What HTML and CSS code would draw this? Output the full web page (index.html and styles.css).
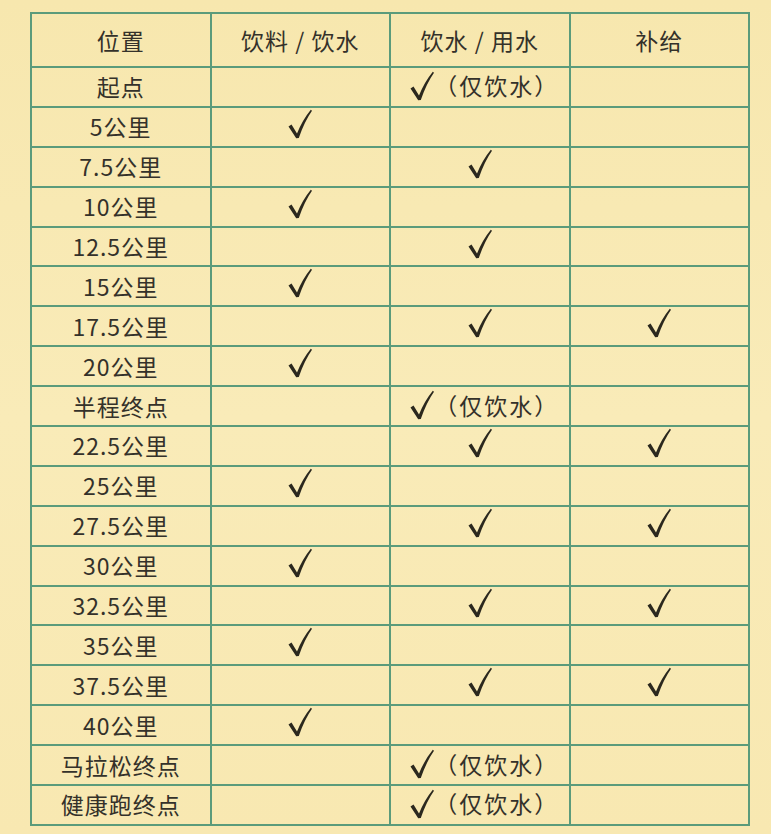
FILE: index.html
```html
<!DOCTYPE html>
<html lang="zh">
<head>
<meta charset="utf-8">
<link rel="stylesheet" href="styles.css">
</head>
<body>
<svg width="0" height="0" class="defs">
  <defs>
    <symbol id="chk" viewBox="0 0 24 30">
      <path d="M0.5 17.5 L3.5 15.5 L9 24.5 Q14.5 11 22.8 0.8 L24 1.8 Q16.5 12.5 10.8 29 L8.2 29.2 Z"/>
    </symbol>
  </defs>
</svg>
<div class="page">
<table class="grid">
  <colgroup><col class="c1"><col class="c2"><col class="c3"><col class="c4"></colgroup>
  <thead>
    <tr class="head"><th>位置</th><th>饮料 / 饮水</th><th>饮水 / 用水</th><th>补给</th></tr>
  </thead>
  <tbody>
    <tr><td>起点</td><td></td><td><span class="only"><svg class="ck"><use href="#chk"/></svg><span>（仅饮水）</span></span></td><td></td></tr>
    <tr><td>5公里</td><td><svg class="ck"><use href="#chk"/></svg></td><td></td><td></td></tr>
    <tr><td>7.5公里</td><td></td><td><svg class="ck"><use href="#chk"/></svg></td><td></td></tr>
    <tr><td>10公里</td><td><svg class="ck"><use href="#chk"/></svg></td><td></td><td></td></tr>
    <tr><td>12.5公里</td><td></td><td><svg class="ck"><use href="#chk"/></svg></td><td></td></tr>
    <tr><td>15公里</td><td><svg class="ck"><use href="#chk"/></svg></td><td></td><td></td></tr>
    <tr><td>17.5公里</td><td></td><td><svg class="ck"><use href="#chk"/></svg></td><td><svg class="ck"><use href="#chk"/></svg></td></tr>
    <tr><td>20公里</td><td><svg class="ck"><use href="#chk"/></svg></td><td></td><td></td></tr>
    <tr><td>半程终点</td><td></td><td><span class="only"><svg class="ck"><use href="#chk"/></svg><span>（仅饮水）</span></span></td><td></td></tr>
    <tr><td>22.5公里</td><td></td><td><svg class="ck"><use href="#chk"/></svg></td><td><svg class="ck"><use href="#chk"/></svg></td></tr>
    <tr><td>25公里</td><td><svg class="ck"><use href="#chk"/></svg></td><td></td><td></td></tr>
    <tr><td>27.5公里</td><td></td><td><svg class="ck"><use href="#chk"/></svg></td><td><svg class="ck"><use href="#chk"/></svg></td></tr>
    <tr><td>30公里</td><td><svg class="ck"><use href="#chk"/></svg></td><td></td><td></td></tr>
    <tr><td>32.5公里</td><td></td><td><svg class="ck"><use href="#chk"/></svg></td><td><svg class="ck"><use href="#chk"/></svg></td></tr>
    <tr><td>35公里</td><td><svg class="ck"><use href="#chk"/></svg></td><td></td><td></td></tr>
    <tr><td>37.5公里</td><td></td><td><svg class="ck"><use href="#chk"/></svg></td><td><svg class="ck"><use href="#chk"/></svg></td></tr>
    <tr><td>40公里</td><td><svg class="ck"><use href="#chk"/></svg></td><td></td><td></td></tr>
    <tr><td>马拉松终点</td><td></td><td><span class="only"><svg class="ck"><use href="#chk"/></svg><span>（仅饮水）</span></span></td><td></td></tr>
    <tr><td>健康跑终点</td><td></td><td><span class="only"><svg class="ck"><use href="#chk"/></svg><span>（仅饮水）</span></span></td><td></td></tr>
  </tbody>
</table>
</div>
</body>
</html>
```
FILE: styles.css
```css
html, body {
  margin: 0;
  padding: 0;
  background: #f8e8b2;
}
.defs {
  position: absolute;
  width: 0;
  height: 0;
}
.page {
  width: 771px;
  height: 834px;
  padding: 12px 0 0 30px;
  box-sizing: border-box;
  overflow: hidden;
  background: linear-gradient(180deg, #f7e7ae 0%, #f9ebb8 50%, #f8e8b1 100%);
}
.grid {
  border-collapse: collapse;
  table-layout: fixed;
  width: 719px;
  font-family: "Noto Sans CJK SC", "Noto Sans", sans-serif;
  color: #34312a;
  font-size: 23px;
  font-weight: normal;
  letter-spacing: 1px;
}
.c1, .c2, .c3, .c4 { width: 179.5px; }
.grid th, .grid td {
  border: 2px solid #5b9b7b;
  text-align: center;
  vertical-align: middle;
  padding: 0;
  font-weight: normal;
  line-height: 1;
  height: 37.9px;
}
.grid .head th {
  height: 52px;
}
.ck {
  width: 24px;
  height: 30px;
  fill: #2b281e;
  display: inline-block;
  vertical-align: middle;
  position: relative;
  top: -3px;
}
.only {
  display: inline-flex;
  align-items: center;
  gap: 0;
  position: relative;
  left: 5px;
}
.only .ck { top: 0; }
.only span { letter-spacing: 2px; }
```
